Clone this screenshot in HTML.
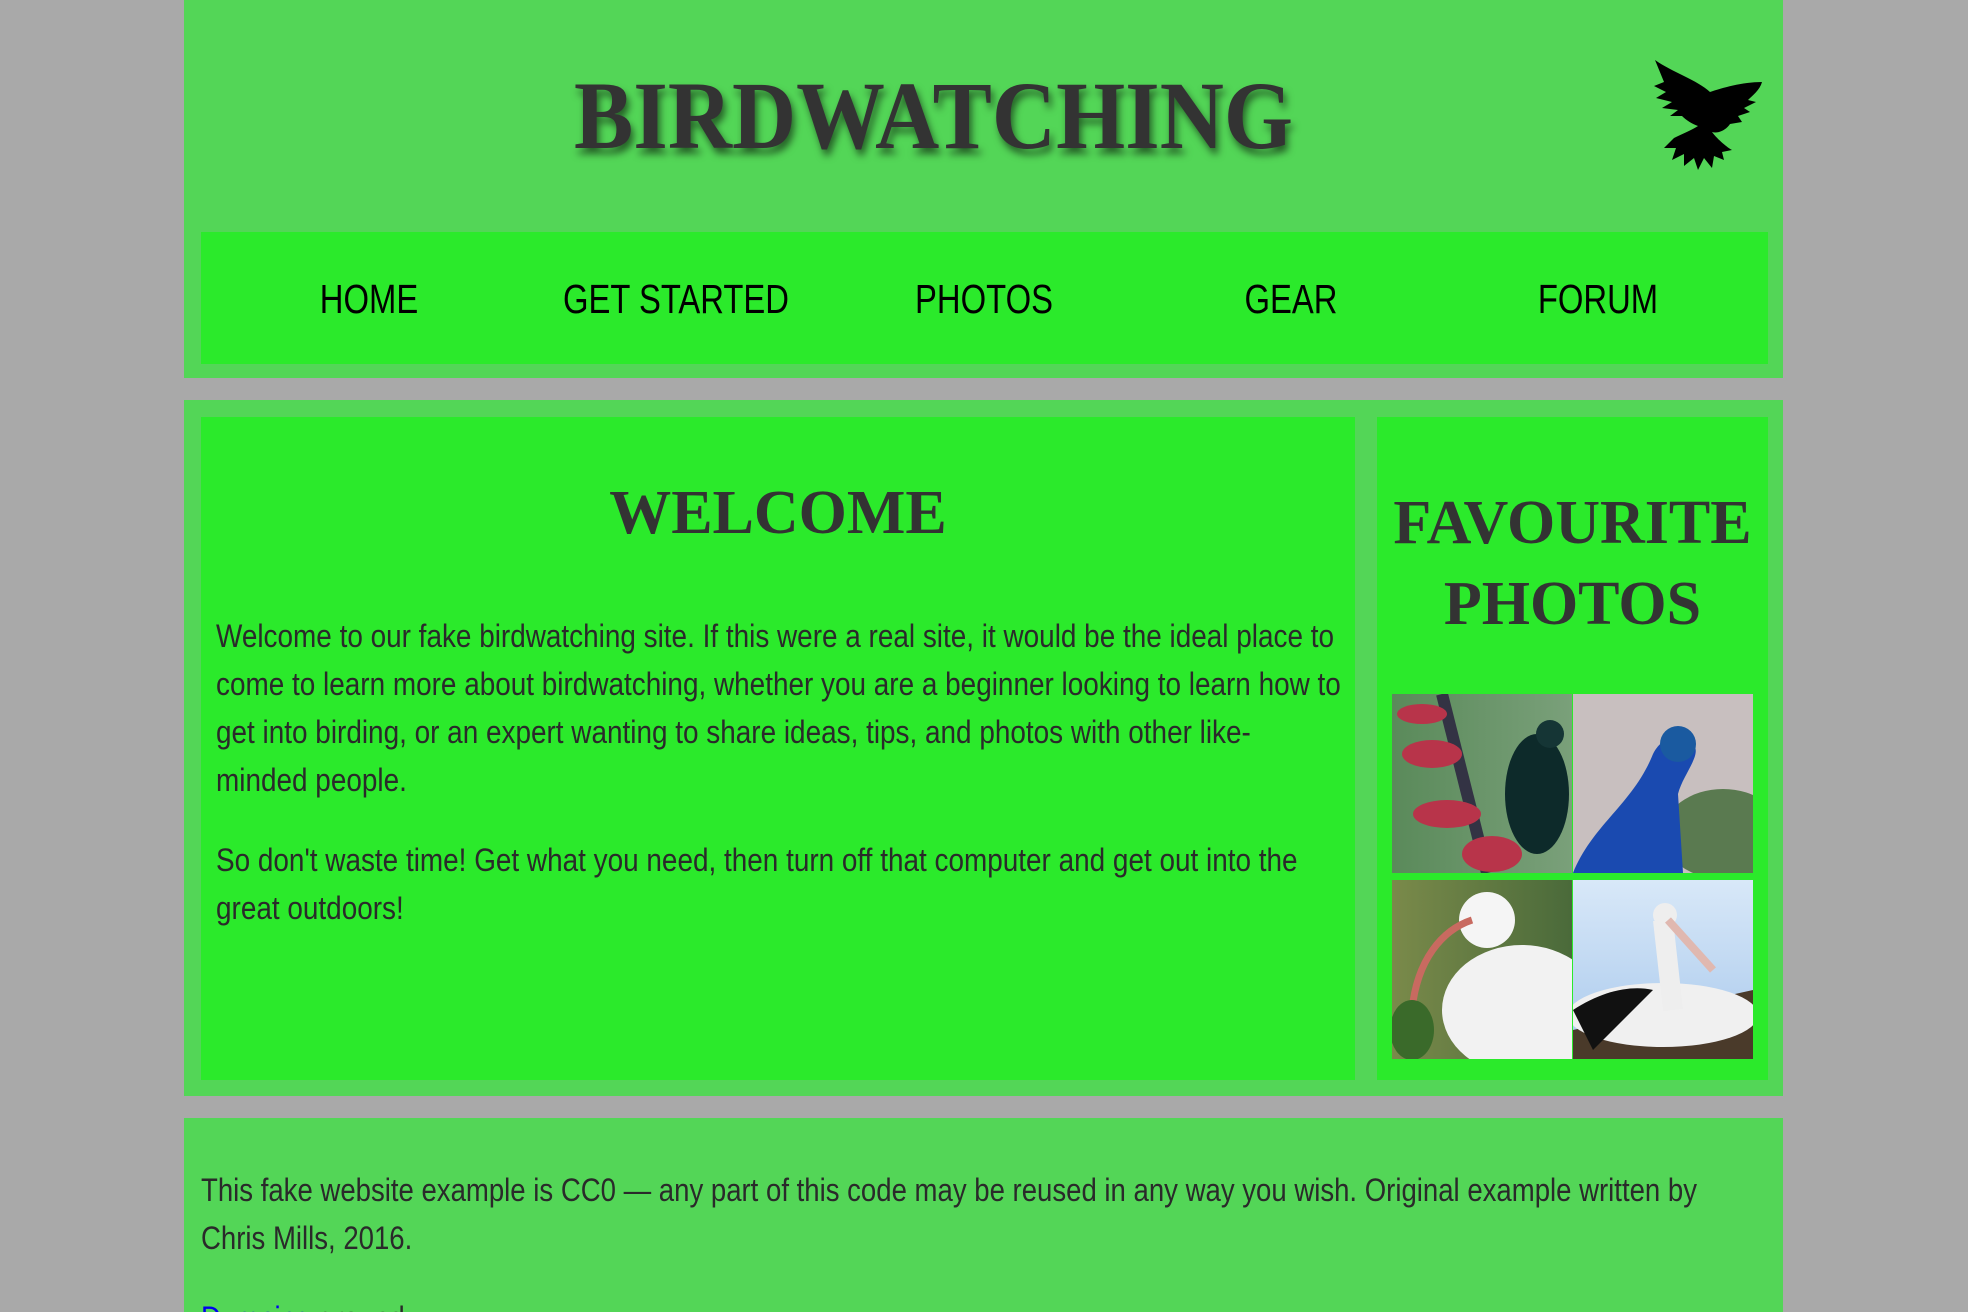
<!DOCTYPE html>
<html><head><meta charset="utf-8">
<style>
*{margin:0;padding:0;box-sizing:border-box}
html,body{width:1968px;height:1312px;overflow:hidden;background:#a9a9a9;font-family:"Liberation Sans",sans-serif}
#w{position:relative;width:1968px;height:1312px;overflow:hidden}
.abs{position:absolute}
.g1{background:#53d657}
.g2{background:#2bea2b}
.title{position:absolute;left:574px;top:68px;font-family:"Liberation Serif",serif;font-weight:bold;font-size:96px;color:#333;text-shadow:3px 6px 8px rgba(0,0,0,0.55);white-space:nowrap;line-height:1;transform-origin:0 0}
.nav span{position:absolute;top:276px;font-size:41px;color:#000;transform:translateX(-50%) scaleX(0.8);white-space:nowrap}
h2{position:absolute;font-family:"Liberation Serif",serif;font-weight:bold;color:#333;font-size:62px;text-align:center;line-height:81px}
.ln{font-size:32px;line-height:48px;height:48px;color:#2a2a2a;white-space:nowrap;transform-origin:0 0;width:max-content}
.tile{position:absolute;width:180px;height:179px;overflow:hidden}
</style></head><body><div id="w">
<div class="abs g1" style="left:184px;top:0;width:1599px;height:378px"></div>
<div class="title" id="t">BIRDWATCHING</div>
<svg class="abs" style="left:1652px;top:60px" width="112" height="110" viewBox="0 0 112 110">
<path fill="#000" d="M3 0 C20 12 45 20 58 32 C70 28 90 22 110 22 C108 30 100 36 96 40 L104 42 L92 48 L98 52 L86 56 L90 62 L78 64 C74 70 66 74 60 72 C66 80 76 88 80 90 L70 92 L72 100 L62 96 L60 108 L52 98 L46 110 L42 98 L32 106 L32 94 L20 100 L24 88 L12 88 L22 78 C30 74 40 70 46 66 C40 64 34 60 30 56 L18 56 L26 50 L10 48 L20 42 L4 38 L14 32 L2 26 L12 22 Z"/>
</svg>
<div class="abs g2" style="left:201px;top:232px;width:1567px;height:132px"></div>
<div class="nav">
<span style="left:369px">HOME</span>
<span style="left:676px">GET STARTED</span>
<span style="left:984px">PHOTOS</span>
<span style="left:1291px">GEAR</span>
<span style="left:1598px">FORUM</span>
</div>

<div class="abs g1" style="left:184px;top:400px;width:1599px;height:696px"></div>
<div class="abs g2" style="left:201px;top:417px;width:1154px;height:663px"></div>
<div class="abs g2" style="left:1377px;top:417px;width:391px;height:663px"></div>
<h2 style="left:201px;top:473px;width:1154px">WELCOME</h2>
<div class="abs" style="left:216px;top:612px;width:1130px">
<div class="ln" id="l1">Welcome to our fake birdwatching site. If this were a real site, it would be the ideal place to</div>
<div class="ln">come to learn more about birdwatching, whether you are a beginner looking to learn how to</div>
<div class="ln">get into birding, or an expert wanting to share ideas, tips, and photos with other like-</div>
<div class="ln">minded people.</div>
<div class="ln" style="margin-top:32px">So don't waste time! Get what you need, then turn off that computer and get out into the</div>
<div class="ln">great outdoors!</div>
</div>
<h2 style="left:1377px;top:483px;width:391px">FAVOURITE<br>PHOTOS</h2>

<div class="tile" style="left:1392px;top:694px;background:linear-gradient(90deg,#5a8a5a,#7aa07a)">
<svg width="180" height="179"><path d="M50 0 L95 179" stroke="#334" stroke-width="12"/><g fill="#b8344a"><ellipse cx="40" cy="60" rx="30" ry="14"/><ellipse cx="55" cy="120" rx="34" ry="14"/><ellipse cx="100" cy="160" rx="30" ry="18"/><ellipse cx="30" cy="20" rx="25" ry="10"/></g><ellipse cx="145" cy="100" rx="32" ry="60" fill="#0d2a2a"/><circle cx="158" cy="40" r="14" fill="#153535"/></svg></div>
<div class="tile" style="left:1573px;top:694px;background:#c8bfbf">
<svg width="180" height="179"><ellipse cx="150" cy="140" rx="60" ry="45" fill="#5a7a50"/><path d="M0 179 C20 130 60 110 80 60 C90 40 110 40 120 50 C130 60 110 80 105 100 L110 179 Z" fill="#1a4ab0"/><circle cx="105" cy="50" r="18" fill="#1a5aa0"/></svg></div>
<div class="tile" style="left:1392px;top:880px;background:linear-gradient(90deg,#7a8a4a,#4a6a3a)">
<svg width="180" height="179"><ellipse cx="130" cy="130" rx="80" ry="65" fill="#f2f2f2"/><circle cx="95" cy="40" r="28" fill="#f5f5f5"/><path d="M80 40 C50 50 25 80 20 130" stroke="#c86a60" stroke-width="7" fill="none"/><ellipse cx="20" cy="150" rx="22" ry="30" fill="#3a6a2a"/></svg></div>
<div class="tile" style="left:1573px;top:880px;background:linear-gradient(#d8e8f8,#a8c8ec)">
<svg width="180" height="179"><path d="M0 150 L180 110 L180 179 L0 179 Z" fill="#4a3a2a"/><ellipse cx="90" cy="135" rx="95" ry="32" fill="#f0f0f0"/><path d="M0 130 C30 110 60 105 80 110 L20 170 Z" fill="#111"/><path d="M90 40 L100 130" stroke="#eee" stroke-width="20"/><circle cx="92" cy="35" r="12" fill="#eee"/><path d="M95 40 L140 90" stroke="#e0b8b0" stroke-width="8"/></svg></div>

<div class="abs g1" style="left:184px;top:1118px;width:1599px;height:194px"></div>
<div class="abs" style="left:201px;top:1166px;width:1560px;height:146px;overflow:hidden">
<div class="ln" id="f1">This fake website example is CC0 — any part of this code may be reused in any way you wish. Original example written by</div>
<div class="ln">Chris Mills, 2016.</div>
<div class="ln" style="margin-top:32px"><span style="color:#00e">Dumping</span> ground</div>
</div>
</div>
<script>
var t=document.getElementById('t');var r=t.getBoundingClientRect().width;t.style.transform='scaleX('+(719/r)+')';
var s=1118/document.getElementById('l1').getBoundingClientRect().width;
var s2=1496/document.getElementById('f1').getBoundingClientRect().width;
var ls=document.querySelectorAll('.ln');
for(var i=0;i<ls.length;i++){ls[i].style.transform='scaleX('+(i<6?s:s2)+')';}
</script>
</body></html>
